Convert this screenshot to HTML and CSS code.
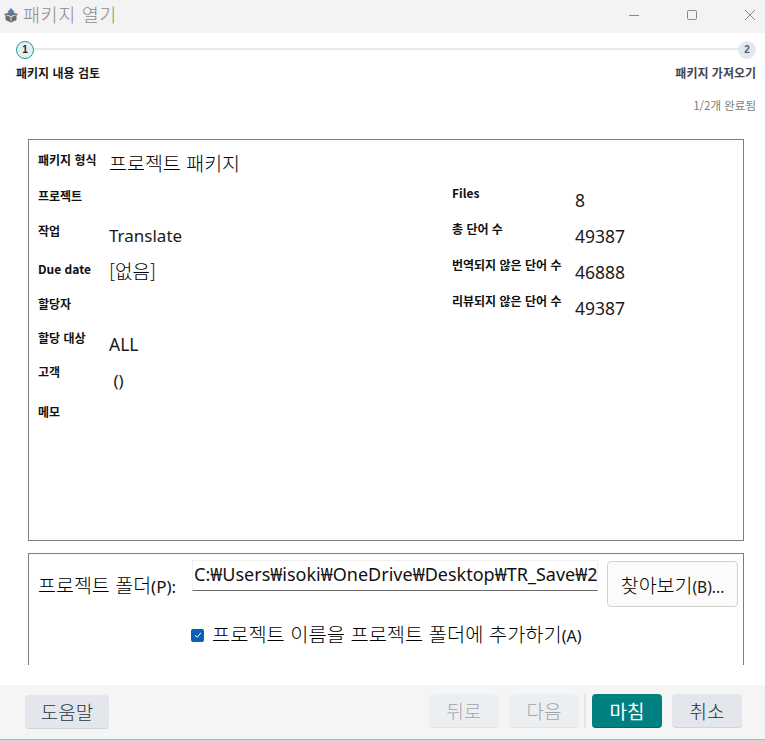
FILE: index.html
```html
<!DOCTYPE html>
<html lang="ko">
<head>
<meta charset="utf-8">
<title>패키지 열기</title>
<link rel="stylesheet" href="styles.css">
</head>
<body>
<div class="window">
  <header class="titlebar">
    <svg class="app-icon" width="16" height="16" viewBox="0 0 16 16">
      <path d="M1 7 L8 5 L15 7 L13.500 8.500 V13 L8 15.500 L2.500 13 V8.500 Z" fill="#6b6b6b"/>
      <path d="M8 9.500 V14 M3.500 8 L8 9.500 L12.500 8" stroke="#e6e6e6" stroke-width="1" fill="none"/>
      <path d="M4.500 5 L8 1 L11.500 5 L8 7.500 Z" fill="#4f81bd"/>
    </svg>
    <span class="title">패키지 열기</span>
    <div class="win-controls">
      <svg width="12" height="12" viewBox="0 0 12 12"><path d="M1 6.500 H11" stroke="#8a8a8a" stroke-width="1"/></svg>
      <svg width="12" height="12" viewBox="0 0 12 12"><rect x="1.500" y="1.500" width="9" height="9" rx="1.200" fill="none" stroke="#8a8a8a" stroke-width="1"/></svg>
      <svg width="12" height="12" viewBox="0 0 12 12"><path d="M1 1 L11 11 M11 1 L1 11" stroke="#8a8a8a" stroke-width="1"/></svg>
    </div>
  </header>

  <section class="stepper">
    <div class="track">
      <span class="step step-active">1</span>
      <span class="line"></span>
      <span class="step step-next">2</span>
    </div>
    <div class="step-labels">
      <span class="label-active">패키지 내용 검토</span>
      <span class="label-next">패키지 가져오기</span>
    </div>
    <div class="progress">1/2개 완료됨</div>
  </section>

  <main class="content">
    <section class="panel details">
      <div class="col col-left">
        <div class="row r1"><span class="key">패키지 형식</span><span class="val ko">프로젝트 패키지</span></div>
        <div class="row r2"><span class="key">프로젝트</span><span class="val"></span></div>
        <div class="row r3"><span class="key">작업</span><span class="val">Translate</span></div>
        <div class="row r4"><span class="key">Due date</span><span class="val ko">[없음]</span></div>
        <div class="row r5"><span class="key">할당자</span><span class="val"></span></div>
        <div class="row r6"><span class="key">할당 대상</span><span class="val">ALL</span></div>
        <div class="row r7"><span class="key">고객</span><span class="val">&nbsp;()</span></div>
        <div class="row r8"><span class="key">메모</span><span class="val"></span></div>
      </div>
      <div class="col col-right">
        <div class="row"><span class="key">Files</span><span class="val">8</span></div>
        <div class="row"><span class="key">총 단어 수</span><span class="val">49387</span></div>
        <div class="row"><span class="key">번역되지 않은 단어 수</span><span class="val">46888</span></div>
        <div class="row"><span class="key">리뷰되지 않은 단어 수</span><span class="val">49387</span></div>
      </div>
    </section>

    <section class="panel folder">
      <div class="folder-row">
        <label class="folder-label"><span class="ko">프로젝트 폴더</span>(P):</label>
        <div class="path-input">C:₩Users₩isoki₩OneDrive₩Desktop₩TR_Save₩2</div>
        <button class="btn-browse"><span class="ko">찾아보기</span>(B)...</button>
      </div>
      <div class="check-row">
        <span class="checkbox">
          <svg width="10" height="10" viewBox="0 0 10 10"><path d="M2 5.300 L4.200 7.300 L8 2.800" stroke="#fff" stroke-width="1" fill="none"/></svg>
        </span>
        <span class="check-text"><span class="ko">프로젝트 이름을 프로젝트 폴더에 추가하기</span>(A)</span>
      </div>
    </section>
  </main>

  <footer class="footer">
    <button class="btn btn-help">도움말</button>
    <div class="footer-right">
      <button class="btn btn-disabled">뒤로</button>
      <button class="btn btn-disabled">다음</button>
      <span class="divider"></span>
      <button class="btn btn-primary">마침</button>
      <button class="btn btn-cancel">취소</button>
    </div>
  </footer>
  <div class="bottom-edge"></div>
</div>
</body>
</html>
```
FILE: styles.css
```css
* { box-sizing: border-box; }
html, body { margin: 0; padding: 0; height: 100%; background: #fff; }
body {
  font-family: "Noto Sans", "Noto Sans CJK KR", sans-serif;
  color: #111;
  overflow: hidden;
}
.window { width: 765px; height: 742px; display: flex; flex-direction: column; }
.ko { font-family: "Noto Sans CJK KR", sans-serif; font-size: 19.500px; font-weight: 300; color: #000; }

.titlebar {
  height: 33px; background: #f3f3f3;
  display: flex; align-items: center;
  padding-left: 3px;
}
.app-icon { flex: none; margin-right: 4px; margin-top: -3px; }
.title { font-size: 18.500px; color: #8b8b8b; letter-spacing: 0.6px; margin-top: -6px; font-family: "Noto Sans CJK KR", sans-serif; font-weight: 300; }
.win-controls {
  margin-left: auto; display: flex; gap: 46px;
  padding-right: 9px; margin-top: -4px;
}

.stepper { padding: 0 9px 0 16px; height: 106px; }
.track { display: flex; align-items: center; margin-top: 7px; height: 19px; }
.step {
  width: 18px; height: 18px; border-radius: 50%;
  display: flex; align-items: center; justify-content: center;
  font-size: 10px; font-weight: 700; flex: none;
  font-family: "Liberation Sans", sans-serif;
}
.step-active { background: #e8eef1; border: 1px solid #17a098; color: #1a2530; }
.step-next { background: #e3e8ee; color: #4d5c70; }
.line { flex: 1; height: 2px; background: #e5e9ed; margin-top: -1px; }
.step-labels {
  display: flex; justify-content: space-between;
  font-size: 12px; font-weight: 700; margin-top: 7px; line-height: 14px;
  font-family: "Noto Sans CJK KR", sans-serif;
}
.label-active { color: #1a1a1a; }
.label-next { color: #3f4650; }
.progress { text-align: right; font-size: 11.500px; color: #7c7c7c; margin-top: 18px; line-height: 14px; font-family: "Noto Sans CJK KR", sans-serif; }

.content { flex: none; padding: 0 21px 0 28px; height: 546px; }
.panel { border: 1px solid #7e7e7e; }
.details { height: 402px; display: flex; padding: 0; }
.col { display: flex; flex-direction: column; }
.col-left { width: 423px; padding: 5px 0 0 9px; }
.col-right { padding: 40px 0 0 0; }
.row { display: flex; align-items: flex-start; }
.col-left .r1 { height: 36px; }
.col-left .r2 { height: 35px; }
.col-left .r3 { height: 38px; }
.col-left .r4 { height: 35px; }
.col-left .r5 { height: 34px; }
.col-left .r6 { height: 34px; }
.col-left .r7 { height: 40px; }
.col-right .row { height: 36px; }
.key {
  font-size: 12px; font-weight: 700; color: #111; line-height: 20px;
  font-family: "Noto Sans CJK KR", sans-serif;
}
.col-left .key { width: 71px; flex: none; margin-top: 5px; }
.col-right .key { width: 123px; flex: none; margin-top: 3px; }
.val { font-size: 17px; line-height: 22px; margin-top: 9px; color: #1a1a1a; }
.val.ko { font-size: 19.500px; color: #000; }
.col-left .r1 .val { margin-top: 7px; }
.col-left .r4 .val { margin-top: 6px; font-size: 19px; }
.col-left .r6 .val { margin-top: 10px; font-size: 17.500px; }
.col-left .r7 .val { margin-top: 13px; }
.col-right .val { margin-top: 9px; font-size: 17.500px; }

.folder {
  margin-top: 12px; height: 112px; border-bottom: 0;
  padding: 0;
}
.folder-row { display: flex; align-items: flex-start; padding: 6px 5px 0 9px; }
.folder-label { font-size: 17px; width: 154px; flex: none; margin-top: 14px; line-height: 22px; }
.path-input {
  width: 406px; height: 31px; flex: none;
  background: #fff; border: 1px solid #f0f0f0; border-bottom: 1px solid #6a6a6a;
  font-size: 18px; line-height: 26px; padding-left: 1px; overflow: hidden; white-space: nowrap;
}
.btn-browse {
  width: 131px; height: 46px; margin-left: 9px; margin-top: 1px; flex: none;
  background: #fbfbfb; border: 1px solid #d0d0d0; border-radius: 4px;
  font: inherit; font-size: 15.500px; color: #1a1a1a; padding: 0;
}
.check-row { display: flex; align-items: center; padding-left: 162px; margin-top: 15px; }
.checkbox {
  width: 13px; height: 13px; background: #0a5fb8; border-radius: 2px;
  display: flex; align-items: center; justify-content: center; flex: none;
}
.check-text { font-size: 16px; margin-left: 8px; line-height: 24px; }
.check-text .ko { font-size: 19.800px; }

.footer {
  flex: none; height: 54px; background: #f5f5f5;
  display: flex; align-items: flex-start; justify-content: space-between;
  padding: 9px 23px 0 25px;
}
.footer-right { display: flex; gap: 10px; align-items: flex-start; }
.btn {
  height: 34px; width: 70px; border: 0; border-radius: 4px; padding: 0;
  font-family: "Noto Sans CJK KR", sans-serif; font-size: 19px; font-weight: 300;
  border-bottom: 1px solid #cfd4da;
}
.btn-help { width: 84px; background: #e3e7eb; color: #2c3642; margin-top: 1px; }
.btn-disabled { background: #eceff2; color: #a0a5ab; border-bottom-color: #e2e5e8; }
.divider { width: 2px; height: 34px; background: #e4e6e8; margin: 0 -4px 0 -5px; }
.btn-primary { background: #008080; color: #fff; border-bottom-color: #006868; font-weight: 400; }
.btn-cancel { background: #e3e7eb; color: #232c37; }
.bottom-edge { flex: none; height: 3px; background: #d4d4d4; border-top: 1px solid #b4b4b4; }
```
